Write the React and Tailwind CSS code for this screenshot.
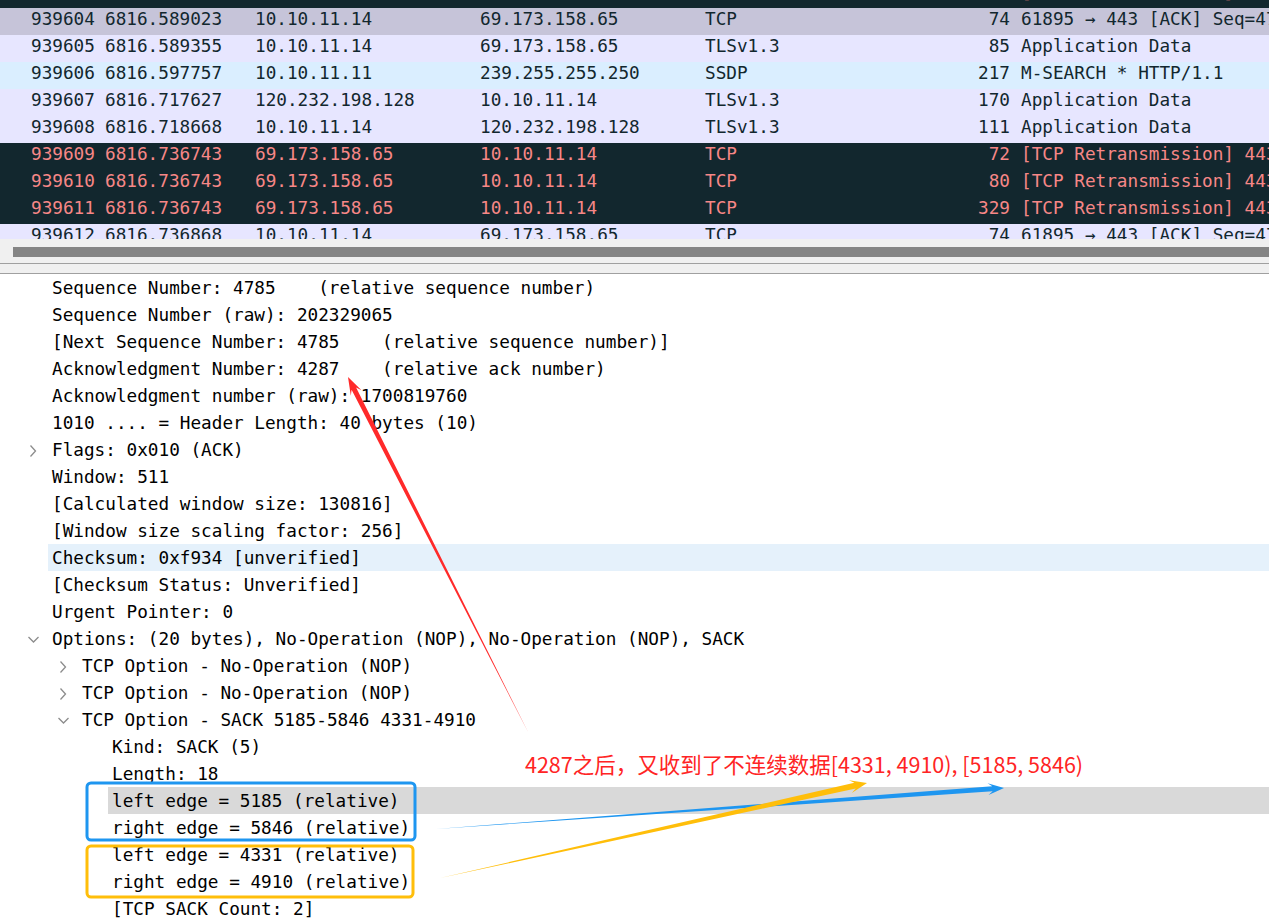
import React from "react";

const mono = { fontFamily: "'DejaVu Sans Mono', 'Liberation Mono', monospace" };

const packets = [
  { no: "939603", t: "6816.736743", src: "69.173.158.65", dst: "10.10.11.14", proto: "TCP", len: "1494", info: "[TCP Retransmission] 443 → 61895 [PSH, ACK] Seq=4287 Ack=4785 Len=44", kind: "bad" },
  { no: "939604", t: "6816.589023", src: "10.10.11.14", dst: "69.173.158.65", proto: "TCP", len: "74", info: "61895 → 443 [ACK] Seq=4785 Ack=4287 Win=511 Len=0 SLE=5185 SRE=5846", kind: "sel" },
  { no: "939605", t: "6816.589355", src: "10.10.11.14", dst: "69.173.158.65", proto: "TLSv1.3", len: "85", info: "Application Data", kind: "tcp" },
  { no: "939606", t: "6816.597757", src: "10.10.11.11", dst: "239.255.255.250", proto: "SSDP", len: "217", info: "M-SEARCH * HTTP/1.1", kind: "udp" },
  { no: "939607", t: "6816.717627", src: "120.232.198.128", dst: "10.10.11.14", proto: "TLSv1.3", len: "170", info: "Application Data", kind: "tcp" },
  { no: "939608", t: "6816.718668", src: "10.10.11.14", dst: "120.232.198.128", proto: "TLSv1.3", len: "111", info: "Application Data", kind: "tcp" },
  { no: "939609", t: "6816.736743", src: "69.173.158.65", dst: "10.10.11.14", proto: "TCP", len: "72", info: "[TCP Retransmission] 443 → 61895 [PSH, ACK] Seq=4287", kind: "bad" },
  { no: "939610", t: "6816.736743", src: "69.173.158.65", dst: "10.10.11.14", proto: "TCP", len: "80", info: "[TCP Retransmission] 443 → 61895 [PSH, ACK] Seq=4331", kind: "bad" },
  { no: "939611", t: "6816.736743", src: "69.173.158.65", dst: "10.10.11.14", proto: "TCP", len: "329", info: "[TCP Retransmission] 443 → 61895 [PSH, ACK] Seq=4910", kind: "bad" },
  { no: "939612", t: "6816.736868", src: "10.10.11.14", dst: "69.173.158.65", proto: "TCP", len: "74", info: "61895 → 443 [ACK] Seq=4785 Ack=4287 Win=511 Len=0", kind: "tcp" },
];

const rowStyle = {
  bad: "bg-[#12272e] text-[#f78787]",
  sel: "bg-[#c6c4d9] text-[#12272e]",
  tcp: "bg-[#e7e6ff] text-[#12272e]",
  udp: "bg-[#daeeff] text-[#12272e]",
};

const tree = [
  { lv: 0, text: "Sequence Number: 4785    (relative sequence number)" },
  { lv: 0, text: "Sequence Number (raw): 202329065" },
  { lv: 0, text: "[Next Sequence Number: 4785    (relative sequence number)]" },
  { lv: 0, text: "Acknowledgment Number: 4287    (relative ack number)" },
  { lv: 0, text: "Acknowledgment number (raw): 1700819760" },
  { lv: 0, text: "1010 .... = Header Length: 40 bytes (10)" },
  { lv: 0, text: "Flags: 0x010 (ACK)", chev: "right" },
  { lv: 0, text: "Window: 511" },
  { lv: 0, text: "[Calculated window size: 130816]" },
  { lv: 0, text: "[Window size scaling factor: 256]" },
  { lv: 0, text: "Checksum: 0xf934 [unverified]", hl: "bg-[#e5f1fb]" },
  { lv: 0, text: "[Checksum Status: Unverified]" },
  { lv: 0, text: "Urgent Pointer: 0" },
  { lv: 0, text: "Options: (20 bytes), No-Operation (NOP), No-Operation (NOP), SACK", chev: "down" },
  { lv: 1, text: "TCP Option - No-Operation (NOP)", chev: "right" },
  { lv: 1, text: "TCP Option - No-Operation (NOP)", chev: "right" },
  { lv: 1, text: "TCP Option - SACK 5185-5846 4331-4910", chev: "down" },
  { lv: 2, text: "Kind: SACK (5)" },
  { lv: 2, text: "Length: 18" },
  { lv: 2, text: "left edge = 5185 (relative)", hl: "bg-[#d9d9d9]" },
  { lv: 2, text: "right edge = 5846 (relative)" },
  { lv: 2, text: "left edge = 4331 (relative)" },
  { lv: 2, text: "right edge = 4910 (relative)" },
  { lv: 2, text: "[TCP SACK Count: 2]" },
];

const spacerW = ["w-[48px]", "w-[78px]", "w-[108px]"];

function Chevron({ dir }) {
  return (
    <svg width="12" height="12" viewBox="0 0 12 12" fill="none" stroke="#8c8c8c" strokeWidth="1.3">
      {dir === "right" ? <polyline points="2.5,0.5 7.5,6 2.5,11.5" /> : <polyline points="0.5,3 5.5,8 10.5,3" />}
    </svg>
  );
}

// tapered screenshot-style arrow
function arrow(x1, y1, x2, y2, w, hw, hl) {
  const dx = x2 - x1, dy = y2 - y1;
  const L = Math.hypot(dx, dy);
  const ux = dx / L, uy = dy / L;
  const nx = -uy, ny = ux;
  const bx = x2 - ux * hl, by = y2 - uy * hl;
  const kx = x2 - ux * hl * 0.72, ky = y2 - uy * hl * 0.72;
  const p = [
    [x1, y1],
    [kx + nx * w / 2, ky + ny * w / 2],
    [bx + nx * hw / 2, by + ny * hw / 2],
    [x2, y2],
    [bx - nx * hw / 2, by - ny * hw / 2],
    [kx - nx * w / 2, ky - ny * w / 2],
  ];
  return p.map((q) => q[0].toFixed(1) + "," + q[1].toFixed(1)).join(" ");
}

export default function App() {
  return (
    <div className="relative w-[1269px] h-[918px] overflow-hidden bg-white text-black" style={mono}>
      {/* packet list */}
      <div className="h-[239px] overflow-hidden">
        <div className="-mt-[19px]">
          {packets.map((p) => (
            <div key={p.no} className={"flex h-[27px] items-center pb-[4px] whitespace-pre text-[17.7px] " + rowStyle[p.kind]}>
              <span className="pl-[31px] w-[105px] shrink-0">{p.no}</span>
              <span className="w-[150px] shrink-0">{p.t}</span>
              <span className="w-[225px] shrink-0">{p.src}</span>
              <span className="w-[225px] shrink-0">{p.dst}</span>
              <span className="w-[240px] shrink-0">{p.proto}</span>
              <span className="w-[65px] shrink-0 text-right">{p.len}</span>
              <span className="pl-[11px] shrink-0">{p.info}</span>
            </div>
          ))}
        </div>
      </div>

      {/* splitter / scrollbar */}
      <div className="h-[25px] bg-[#f0f0f0] pt-[8px] border-b border-[#a0a0a0]">
        <div className="ml-[13px] h-[10px] bg-[#858585]" />
      </div>
      <div className="h-[10px] bg-[#f0f0f0] border-b border-[#a0a0a0]" />

      {/* detail tree */}
      <div className="text-[17.7px]">
        {tree.map((r, i) => (
          <div key={i} className="flex h-[27px]">
            <div className={"shrink-0 flex items-center justify-end pr-[8px] pt-[2px] " + spacerW[r.lv]}>
              {r.chev && <Chevron dir={r.chev} />}
            </div>
            <div className={"flex-1 flex items-center pl-[4px] pt-[2px] whitespace-pre " + (r.hl || "")}>{r.text}</div>
          </div>
        ))}
      </div>

      {/* annotations */}
      <svg className="absolute left-0 top-0 pointer-events-none" width="1269" height="918" viewBox="0 0 1269 918">
        <rect x="87" y="783" width="328" height="57" rx="4" fill="none" stroke="#1e96f0" strokeWidth="3" />
        <rect x="87" y="846" width="326" height="51" rx="4" fill="none" stroke="#ffbe0a" strokeWidth="3" />
        <polygon points={arrow(528, 732, 348, 377, 5, 12, 18)} fill="#ff2a2a" />
        <polygon points={arrow(436, 829, 1004, 788, 5, 12, 16)} fill="#1e96f0" />
        <polygon points={arrow(440, 878, 867, 783, 6, 13, 17)} fill="#ffbe0a" />
      </svg>
      <div
        className="absolute left-[525px] top-[749px] text-[21.5px] leading-[30px] text-[#ff2424] whitespace-nowrap"
        style={{ fontFamily: "'Noto Sans CJK SC', 'Noto Sans', sans-serif" }}
      >
        4287之后，又收到了不连续数据[4331, 4910), [5185, 5846)
      </div>
    </div>
  );
}
